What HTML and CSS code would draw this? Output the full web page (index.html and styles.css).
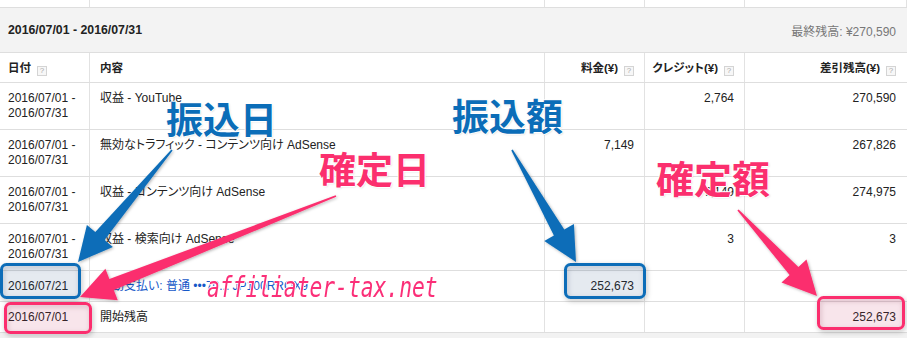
FILE: index.html
```html
<!DOCTYPE html>
<html lang="ja">
<head>
<meta charset="utf-8">
<title>お支払い履歴</title>
<link rel="stylesheet" href="styles.css">
</head>
<body>
<div class="sheet">
  <div class="row stub"><div class="c"></div><div class="c"></div><div class="c"></div><div class="c"></div><div class="c"></div></div>
  <div class="period">
    <span class="range">2016/07/01 - 2016/07/31</span>
    <span class="final">最終残高: ¥270,590</span>
  </div>
  <div class="row head">
    <div class="c date">日付<span class="help">?</span></div>
    <div class="c desc">内容</div>
    <div class="c num">料金(¥)<span class="help">?</span></div>
    <div class="c num">クレジット(¥)<span class="help">?</span></div>
    <div class="c num last">差引残高(¥)<span class="help">?</span></div>
  </div>
  <div class="row">
    <div class="c date">2016/07/01 -<br>2016/07/31</div>
    <div class="c desc">収益 - YouTube</div>
    <div class="c num"></div>
    <div class="c num">2,764</div>
    <div class="c num last">270,590</div>
  </div>
  <div class="row">
    <div class="c date">2016/07/01 -<br>2016/07/31</div>
    <div class="c desc">無効なトラフィック - コンテンツ向け AdSense</div>
    <div class="c num">7,149</div>
    <div class="c num"></div>
    <div class="c num last">267,826</div>
  </div>
  <div class="row">
    <div class="c date">2016/07/01 -<br>2016/07/31</div>
    <div class="c desc">収益 - コンテンツ向け AdSense</div>
    <div class="c num"></div>
    <div class="c num">7,149</div>
    <div class="c num last">274,975</div>
  </div>
  <div class="row">
    <div class="c date">2016/07/01 -<br>2016/07/31</div>
    <div class="c desc">収益 - 検索向け AdSense</div>
    <div class="c num"></div>
    <div class="c num">3</div>
    <div class="c num last">3</div>
  </div>
  <div class="row">
    <div class="c date">2016/07/21</div>
    <div class="c desc"><span class="link">自動支払い: 普通 •••70... JP100RROX9</span></div>
    <div class="c num">252,673</div>
    <div class="c num"></div>
    <div class="c num last"></div>
  </div>
  <div class="row">
    <div class="c date">2016/07/01</div>
    <div class="c desc">開始残高</div>
    <div class="c num"></div>
    <div class="c num"></div>
    <div class="c num last">252,673</div>
  </div>
  <div class="foot"></div>

  <svg class="marks" width="907" height="338" viewBox="0 0 907 338" aria-hidden="true">
    <defs>
      <filter id="sh" x="-20%" y="-20%" width="140%" height="140%">
        <feDropShadow dx="1" dy="1" stdDeviation="1.5" flood-color="#000" flood-opacity="0.3"/>
      </filter>
      <filter id="bsh" x="-20%" y="-30%" width="140%" height="160%">
        <feDropShadow dx="1" dy="2" stdDeviation="2.5" flood-color="#000" flood-opacity="0.28"/>
      </filter>
    </defs>
    <rect x="1.5" y="264.5" width="78" height="33" rx="5" class="box-b" filter="url(#bsh)"/>
    <rect x="565.5" y="264.5" width="79" height="33" rx="5" class="box-b" filter="url(#bsh)"/>
    <rect x="5.5" y="303.5" width="85" height="29" rx="5" class="box-p" filter="url(#bsh)"/>
    <rect x="818.5" y="297.5" width="85" height="31" rx="5" class="box-p" filter="url(#bsh)"/>

    <polygon class="ar-b" filter="url(#sh)" points="172.6,150.5 104.5,239.9 112.9,246.9 78,262 86.9,225.1 95.3,232.1 171.4,149.5"/>
    <polygon class="ar-b" filter="url(#sh)" points="512.7,149.6 564.3,229.5 573.9,224.1 576,262 544.3,240.9 553.9,235.5 511.3,150.4"/>
    <polygon class="ar-p" filter="url(#sh)" points="336.3,196.7 113.8,290.1 117.8,300.3 80,297 105.4,268.7 109.4,278.9 335.7,195.3"/>
    <polygon class="ar-p" filter="url(#sh)" points="738.6,209.5 798.4,266.9 806.5,259.5 817,296 781.5,282.5 789.6,275.1 737.4,210.5"/>
  </svg>

  <span class="note blue n1">振込日</span>
  <span class="note blue n2">振込額</span>
  <span class="note pink n3">確定日</span>
  <span class="note pink n4">確定額</span>
  <span class="wm">affiliater-tax.net</span>
</div>
</body>
</html>
```
FILE: styles.css
```css
* { box-sizing: border-box; }

html, body {
  margin: 0;
  padding: 0;
  background: #fff;
}

body {
  font-family: "Liberation Sans", "Noto Sans CJK JP", sans-serif;
  font-size: 12px;
  color: #222;
  font-feature-settings: "palt";
}

.sheet {
  position: relative;
  width: 907px;
  height: 338px;
  overflow: hidden;
}

.row {
  display: grid;
  grid-template-columns: 90px 455px 100px 100px 162px;
  border-bottom: 1px solid #dedede;
}

.c {
  border-right: 1px solid #e2e2e2;
  padding: 8px 10px;
  line-height: 15px;
  height: 46px;
  white-space: nowrap;
}

.c.last { border-right: none; padding-right: 11px; }

.date { padding-left: 8px; padding-right: 4px; }
.num { text-align: right; padding-left: 2px; }

.stub .c { height: 7px; padding: 0; }

.period {
  display: flex;
  justify-content: space-between;
  align-items: center;
  height: 45px;
  padding: 0 11px 0 8px;
  background: #f3f3f3;
  border-bottom: 1px solid #dedede;
}

.range {
  font-weight: bold;
  font-size: 12.3px;
  color: #222;
}

.final {
  font-size: 12px;
  color: #777;
}

.head .c {
  height: 29px;
  padding-top: 8px;
  padding-bottom: 6px;
  font-weight: bold;
  font-size: 11.5px;
  color: #222;
}

.help {
  display: inline-block;
  width: 10px;
  height: 10px;
  margin-left: 6px;
  border: 1px solid #d4d4d4;
  background: #f7f7f7;
  color: #aaa;
  font-size: 8px;
  font-weight: normal;
  line-height: 8px;
  text-align: center;
  vertical-align: -1px;
}

.row:nth-child(n+8) .c { height: 30px; }

.link { color: #1558c8; }

.foot {
  height: 5px;
  background: #f2f2f2;
}

.marks {
  position: absolute;
  left: 0;
  top: 0;
  pointer-events: none;
}

.box-b { fill: rgba(40, 85, 145, 0.1); stroke: #0b6db8; stroke-width: 3; }
.box-p { fill: rgba(215, 60, 110, 0.1); stroke: #fb2f6e; stroke-width: 3; }
.ar-b { fill: #0b6db8; }
.ar-p { fill: #fb2f6e; }

.note {
  position: absolute;
  font-family: "Noto Sans CJK JP", sans-serif;
  font-weight: bold;
  font-size: 37px;
  line-height: 1;
  white-space: nowrap;
  font-feature-settings: normal;
  text-shadow: 1px 0 0 #fff, -1px 0 0 #fff, 0 1px 0 #fff, 0 -1px 0 #fff, 1px 1px 2px rgba(0,0,0,0.15);
}

.blue { color: #0b6db8; }
.pink { color: #fb2f6e; }

.n1 { left: 166px; top: 100px; }
.n2 { left: 452px; top: 97px; }
.n3 { left: 319px; top: 150px; }
.n4 { left: 656px; top: 158px; font-size: 38px; }

.wm {
  position: absolute;
  left: 207px;
  top: 274px;
  font-family: "DejaVu Sans Mono", monospace;
  font-style: oblique;
  font-size: 28px;
  line-height: 28px;
  color: #fb2f78;
  white-space: nowrap;
  transform: scaleX(0.76);
  transform-origin: left top;
  text-shadow: 1px 0 0 #fff, -1px 0 0 #fff, 0 1px 0 #fff, 0 -1px 0 #fff;
}
```
